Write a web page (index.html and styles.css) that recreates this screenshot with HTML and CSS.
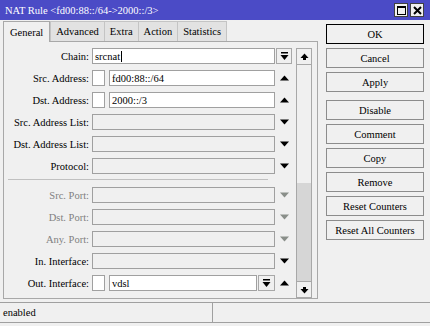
FILE: index.html
```html
<!DOCTYPE html>
<html lang="en">
<head>
    <meta charset="UTF-8">
    <title>NAT Rule</title>
    <link rel="stylesheet" href="styles.css">
</head>

<body>
    <div class="window">
        <!-- title bar -->
        <div class="titlebar">
            <span class="title">NAT Rule &lt;fd00:88::/64-&gt;2000::/3&gt;</span>
            <div class="winBtns">
                <span class="winBtn">
                    <svg width="11" height="11" viewBox="0 0 11 11"><rect x="1.5" y="1.5" width="8" height="8" fill="none" stroke="#000" stroke-width="1"/><rect x="1" y="1" width="9" height="2" fill="#000"/></svg>
                </span>
                <span class="winBtn">
                    <svg width="11" height="11" viewBox="0 0 11 11"><path d="M2 2 L9 9 M9 2 L2 9" stroke="#000" stroke-width="2"/></svg>
                </span>
            </div>
        </div>

        <div class="main">
            <div class="left">
                <!-- tabs -->
                <div class="tabs">
                    <span class="tab active">General</span>
                    <span class="tab">Advanced</span>
                    <span class="tab">Extra</span>
                    <span class="tab">Action</span>
                    <span class="tab">Statistics</span>
                </div>
                <div class="panel">
                    <div class="form">
                        <div class="row">
                            <label>Chain:</label>
                            <div class="field">
                                <span class="input white">srcnat<i class="caret"></i></span>
                            </div>
                            <span class="arrow ddBtn"><svg width="9" height="9" viewBox="0 0 9 9"><rect x="1" y="0" width="7" height="1.5" fill="#000"/><path d="M0.5 3 H8.5 L4.5 8 Z" fill="#000"/></svg></span>
                        </div>
                        <div class="row">
                            <label>Src. Address:</label>
                            <div class="field">
                                <span class="check"></span>
                                <span class="input white">fd00:88::/64</span>
                            </div>
                            <span class="arrow"><svg width="9" height="6" viewBox="0 0 9 6"><path d="M0 5.5 H9 L4.5 0.5 Z" fill="#000"/></svg></span>
                        </div>
                        <div class="row">
                            <label>Dst. Address:</label>
                            <div class="field">
                                <span class="check"></span>
                                <span class="input white">2000::/3</span>
                            </div>
                            <span class="arrow"><svg width="9" height="6" viewBox="0 0 9 6"><path d="M0 5.5 H9 L4.5 0.5 Z" fill="#000"/></svg></span>
                        </div>
                        <div class="row">
                            <label>Src. Address List:</label>
                            <div class="field"><span class="input"></span></div>
                            <span class="arrow"><svg width="9" height="6" viewBox="0 0 9 6"><path d="M0 0.5 H9 L4.5 5.5 Z" fill="#000"/></svg></span>
                        </div>
                        <div class="row">
                            <label>Dst. Address List:</label>
                            <div class="field"><span class="input"></span></div>
                            <span class="arrow"><svg width="9" height="6" viewBox="0 0 9 6"><path d="M0 0.5 H9 L4.5 5.5 Z" fill="#000"/></svg></span>
                        </div>
                        <div class="row">
                            <label>Protocol:</label>
                            <div class="field"><span class="input"></span></div>
                            <span class="arrow"><svg width="9" height="6" viewBox="0 0 9 6"><path d="M0 0.5 H9 L4.5 5.5 Z" fill="#000"/></svg></span>
                        </div>
                        <div class="sep"></div>
                        <div class="row off">
                            <label>Src. Port:</label>
                            <div class="field"><span class="input"></span></div>
                            <span class="arrow"><svg width="9" height="6" viewBox="0 0 9 6"><path d="M0 0.5 H9 L4.5 5.5 Z" fill="#8a8f8a"/></svg></span>
                        </div>
                        <div class="row off">
                            <label>Dst. Port:</label>
                            <div class="field"><span class="input"></span></div>
                            <span class="arrow"><svg width="9" height="6" viewBox="0 0 9 6"><path d="M0 0.5 H9 L4.5 5.5 Z" fill="#8a8f8a"/></svg></span>
                        </div>
                        <div class="row off">
                            <label>Any. Port:</label>
                            <div class="field"><span class="input"></span></div>
                            <span class="arrow"><svg width="9" height="6" viewBox="0 0 9 6"><path d="M0 0.5 H9 L4.5 5.5 Z" fill="#8a8f8a"/></svg></span>
                        </div>
                        <div class="row">
                            <label>In. Interface:</label>
                            <div class="field"><span class="input"></span></div>
                            <span class="arrow"><svg width="9" height="6" viewBox="0 0 9 6"><path d="M0 0.5 H9 L4.5 5.5 Z" fill="#000"/></svg></span>
                        </div>
                        <div class="row">
                            <label>Out. Interface:</label>
                            <div class="field">
                                <span class="check"></span>
                                <span class="input white">vdsl</span>
                                <span class="ddBtn inField"><svg width="9" height="9" viewBox="0 0 9 9"><rect x="1" y="0" width="7" height="1.5" fill="#000"/><path d="M0.5 3 H8.5 L4.5 8 Z" fill="#000"/></svg></span>
                            </div>
                            <span class="arrow"><svg width="9" height="6" viewBox="0 0 9 6"><path d="M0 5.5 H9 L4.5 0.5 Z" fill="#000"/></svg></span>
                        </div>
                    </div>
                    <!-- scroll bar -->
                    <div class="scrollbar">
                        <span class="sbBtn"><svg width="9" height="8" viewBox="0 0 9 8"><path d="M0.5 5 H8.5 L4.5 0.5 Z" fill="#000"/><rect x="3" y="4" width="3" height="3" fill="#000"/></svg></span>
                        <span class="track"></span>
                        <span class="thumb"></span>
                        <span class="sbBtn"><svg width="9" height="8" viewBox="0 0 9 8"><rect x="3" y="1" width="3" height="3" fill="#000"/><path d="M0.5 3 H8.5 L4.5 7.5 Z" fill="#000"/></svg></span>
                    </div>
                </div>
            </div>

            <!-- buttons -->
            <div class="buttons">
                <span class="btn default">OK</span>
                <span class="btn">Cancel</span>
                <span class="btn">Apply</span>
                <span class="btn gapTop">Disable</span>
                <span class="btn">Comment</span>
                <span class="btn">Copy</span>
                <span class="btn">Remove</span>
                <span class="btn">Reset Counters</span>
                <span class="btn">Reset All Counters</span>
            </div>
        </div>

        <!-- status bar -->
        <div class="statusbar">
            <span class="status">enabled</span>
            <span class="status rest"></span>
        </div>
    </div>
</body>

</html>
```

FILE: styles.css
```css
* {
    padding: 0;
    margin: 0;
    box-sizing: border-box;
}

body {
    font-family: "Liberation Serif", "Noto Sans CJK TC", serif;
    font-size: 10.5px;
    color: #000;
    background-color: #f0f0f0;
}

.window {
    width: 430px;
    height: 326px;
    background-color: #f0f0f0;
    display: flex;
    flex-direction: column;
}

/* title bar */
.titlebar {
    height: 20px;
    background-color: #4b4bc6;
    color: #fff;
    display: flex;
    align-items: center;
    justify-content: space-between;
    padding: 0 6px 0 5px;
}

.titlebar .title {
    font-size: 10.5px;
}

.winBtns {
    display: flex;
    gap: 2px;
}

.winBtn {
    width: 14px;
    height: 14px;
    background-color: #f0f0f0;
    border: 1px solid #404040;
    display: flex;
    align-items: center;
    justify-content: center;
}

.main {
    display: flex;
    padding-top: 1px;
}

.left {
    margin-left: 3px;
    width: 315px;
}

/* tabs */
.tabs {
    display: flex;
    height: 20px;
}

.tab {
    display: flex;
    align-items: center;
    padding: 0 5px;
    background-color: #e2e2e2;
    border: 1px solid #c4c4c4;
    border-bottom: none;
    margin-right: -1px;
}

.tab.active {
    background-color: #f0f0f0;
    border-color: #a8a8a8;
    position: relative;
    z-index: 1;
    height: 21px;
    margin-right: 0;
    padding: 0 6px;
}

.panel {
    display: flex;
    height: 258px;
    border: 1px solid #a8a8a8;
    padding: 6px 5px 0 0;
}

.form {
    display: flex;
    flex-direction: column;
    gap: 6px;
}

.row {
    display: flex;
    height: 16px;
    align-items: center;
}

.row label {
    width: 85px;
    margin-right: 3px;
    text-align: right;
}

.row.off label {
    color: #808080;
}

.field {
    width: 183px;
    height: 16px;
    display: flex;
    gap: 4px;
}

.input {
    flex: 1;
    height: 16px;
    border: 1px solid #a0a0a0;
    background-color: #f0f0f0;
    padding-left: 2px;
    display: flex;
    align-items: center;
}

.input.white {
    background-color: #fff;
}

.caret {
    display: inline-block;
    width: 1px;
    height: 11px;
    background-color: #000;
    margin-left: 1px;
}

.check {
    width: 13px;
    height: 16px;
    border: 1px solid #a0a0a0;
    background-color: #fff;
}

.arrow {
    width: 16px;
    height: 16px;
    margin-left: 1px;
    display: flex;
    align-items: center;
    justify-content: center;
}

.ddBtn {
    border: 1px solid #a8a8a8;
    background-color: #f0f0f0;
    display: flex;
    align-items: center;
    justify-content: center;
}

.ddBtn.inField {
    width: 17px;
    height: 16px;
    margin-left: -3px;
}

.sep {
    height: 1px;
    margin: -1px 24px 1px 4px;
    background-color: #c0c0c0;
}

/* scroll bar */
.scrollbar {
    width: 16px;
    height: 250px;
    margin-left: 4px;
    display: flex;
    flex-direction: column;
    border: 1px solid #a8a8a8;
}

.sbBtn {
    height: 16px;
    background-color: #f0f0f0;
    border-bottom: 1px solid #a8a8a8;
    display: flex;
    align-items: center;
    justify-content: center;
}

.sbBtn:last-child {
    border-bottom: none;
    border-top: 1px solid #a8a8a8;
}

.track {
    height: 118px;
    background-color: #f0f0f0;
}

.thumb {
    flex: 1;
    background-color: #d6d6d6;
}

/* buttons */
.buttons {
    margin-left: 8px;
    width: 98px;
    padding-top: 3px;
    display: flex;
    flex-direction: column;
    gap: 4px;
}

.btn {
    height: 20px;
    border: 1px solid #8c8c8c;
    background-color: #f0f0f0;
    display: flex;
    align-items: center;
    justify-content: center;
}

.btn.default {
    border-color: #000;
}

.btn.gapTop {
    margin-top: 4px;
}

/* status bar */
.statusbar {
    margin-top: 3px;
    height: 21px;
    display: flex;
    border-top: 1px solid #a0a0a0;
    border-bottom: 1px solid #a0a0a0;
}

.status {
    width: 213px;
    padding-left: 3px;
    display: flex;
    align-items: center;
    border-right: 1px solid #a0a0a0;
}

.status.rest {
    flex: 1;
    border-right: none;
    margin-right: 4px;
}
```
